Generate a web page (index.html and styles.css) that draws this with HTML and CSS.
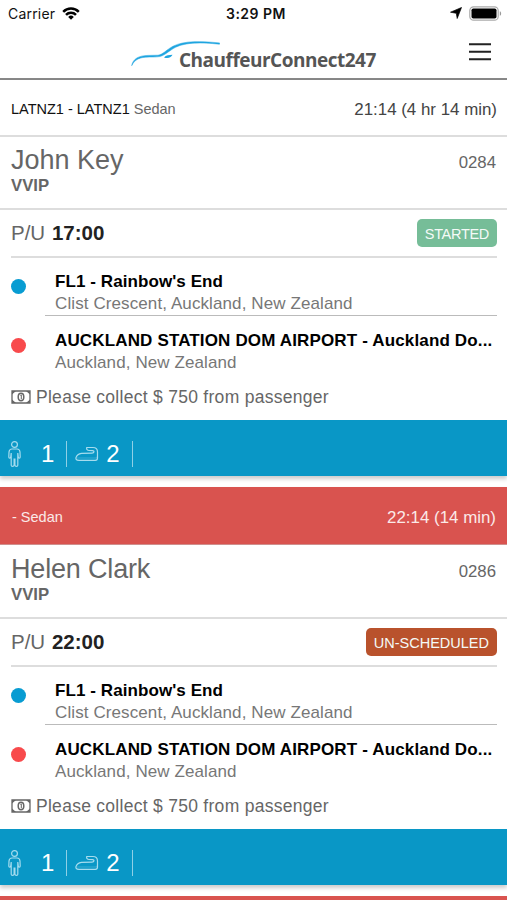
FILE: index.html
```html
<!DOCTYPE html>
<html lang="en">
<head>
<meta charset="utf-8">
<title>ChauffeurConnect247</title>
<link rel="stylesheet" href="styles.css">
</head>
<body>
<svg class="defs" aria-hidden="true">
  <symbol id="person" viewBox="0 0 14 28">
    <circle cx="7.500" cy="4.500" r="2.900"/>
    <path d="M5 9h5c2 0 2.800 1 3 3l.2 5c0 1.500-1.700 1.500-1.900.2L10.800 13v12.200c0 1.500-2.700 1.500-2.900 0V19h-.8v6.200c-.2 1.500-2.900 1.500-2.900 0V13l-.5 4.200c-.2 1.300-1.900 1.300-1.900-.2l.2-5c.2-2 1-3 3-3z"/>
  </symbol>
  <symbol id="bag" viewBox="0 0 24 17">
    <path d="M11.800 1.500H18c3.500 0 4.500 1.500 4.500 4.500V12c0 1.600-.8 2.300-2.200 2.300H4c-3 0-3.500-1.500-2.800-3.300C2 8.500 4 7.800 6.500 7.300l10.500-.2c2.500 0 2.500-2.400.5-2.500L14 4.500c-1.500-.1-2.800-1-2.200-3z"/>
    <path d="M1.500 12h19c1.300 0 1.800-.6 2-1.500" opacity=".3"/>
  </symbol>
  <symbol id="cash" viewBox="0 0 20 14">
    <path d="M1 1h18v12H1z" fill="none" stroke="#666" stroke-width="1.300"/>
    <path d="M1 1h4L1 4.500zM19 1h-4l4 3.500zM1 13h4l-4-3.500zM19 13h-4l4-3.500z" fill="#666"/>
    <ellipse cx="10" cy="7" rx="2.800" ry="3.700" fill="none" stroke="#666" stroke-width="1.500"/>
    <path d="M9.300 5.300l1-.5v4.500" fill="none" stroke="#666"/>
  </symbol>
</svg>

<div class="status">
  <span class="carrier">Carrier</span>
  <svg class="wifi" width="18" height="13" viewBox="0 0 18 13"><g fill="none" stroke="#000" stroke-width="2.500"><path d="M1.200 4.800a11 11 0 0 1 15.600 0"/><path d="M4 7.900a7 7 0 0 1 10 0"/></g><path d="M9 12.700L6.200 9.900a4 4 0 0 1 5.600 0z"/></svg>
  <span class="clock">3:29 PM</span>
  <svg class="arrow" width="12" height="12" viewBox="0 0 12 12"><path d="M11.500.5L7.200 11.500 6.300 6.300.5 5.200z" stroke="#000" stroke-width=".7"/></svg>
  <svg class="battery" width="33" height="15" viewBox="0 0 33 15"><rect x=".8" y=".8" width="28.400" height="13.400" rx="3.800" fill="none" stroke="#aaa" stroke-width="1.200"/><rect x="2.500" y="2.500" width="25" height="10" rx="1.800"/><path d="M30.800 5.200c1.800.6 1.800 4 0 4.600z" fill="#999"/></svg>
</div>

<header class="header">
  <div class="logo">
    <svg width="90" height="26" viewBox="0 0 90 26"><path d="M.7 24.700C2 17.500 8 14.600 17 14.400l10-.2c5-.7 8-5.200 15-9C54-.7 70 .2 88.500 1.900v1.300C70 1.300 55 1.200 44.500 6.300 38 9.700 34 14.500 28.500 15.600c-4 .7-9 .2-14 .6C7.500 16.800 3.500 19 .7 24.700z" fill="#1fa5e0" stroke="#1fa5e0" stroke-width=".5"/><path d="M33 16.500c2-2.300 5-2.500 8.500-2.700-1 2.600-4.500 4.200-8.500 2.700z" fill="#1fa5e0"/></svg>
    <span class="brand">ChauffeurConnect247</span>
  </div>
  <svg class="menu" width="24" height="20" viewBox="0 0 24 20"><path d="M1 2.200h22M1 9.700h22M1 17.200h22" stroke="#222" stroke-width="2"/></svg>
</header>

<main>
  <article class="card">
    <div class="top"><span class="route"><b>LATNZ1 - LATNZ1</b> Sedan</span><span class="eta">21:14 (4 hr 14 min)</span></div>
    <div class="client"><div><div class="name">John Key</div><div class="vip">VVIP</div></div><span class="number">0284</span></div>
    <div class="pickup"><span class="pu">P/U <b>17:00</b></span><span class="tag started">STARTED</span></div>
    <div class="stop first"><i class="dot blue"></i><div class="place"><div class="title t1">FL1 - Rainbow's End</div><div class="address">Clist Crescent, Auckland, New Zealand</div></div></div>
    <div class="stop"><i class="dot red"></i><div class="place"><div class="title">AUCKLAND STATION DOM AIRPORT - Auckland Do...</div><div class="address">Auckland, New Zealand</div></div></div>
    <div class="note"><svg width="20" height="14"><use href="#cash"/></svg><span>Please collect $ 750 from passenger</span></div>
    <div class="counts"><svg class="person" width="14" height="28"><use href="#person"/></svg><span class="one">1</span><i class="bar"></i><svg class="bag" width="24" height="17"><use href="#bag"/></svg><span class="two">2</span><i class="bar"></i></div>
  </article>

  <article class="card late">
    <div class="top"><span class="route">- Sedan</span><span class="eta">22:14 (14 min)</span></div>
    <div class="client"><div><div class="name helen">Helen Clark</div><div class="vip">VVIP</div></div><span class="number">0286</span></div>
    <div class="pickup"><span class="pu">P/U <b>22:00</b></span><span class="tag unscheduled">UN-SCHEDULED</span></div>
    <div class="stop first"><i class="dot blue"></i><div class="place"><div class="title t1">FL1 - Rainbow's End</div><div class="address">Clist Crescent, Auckland, New Zealand</div></div></div>
    <div class="stop"><i class="dot red"></i><div class="place"><div class="title">AUCKLAND STATION DOM AIRPORT - Auckland Do...</div><div class="address">Auckland, New Zealand</div></div></div>
    <div class="note"><svg width="20" height="14"><use href="#cash"/></svg><span>Please collect $ 750 from passenger</span></div>
    <div class="counts"><svg class="person" width="14" height="28"><use href="#person"/></svg><span class="one">1</span><i class="bar"></i><svg class="bag" width="24" height="17"><use href="#bag"/></svg><span class="two">2</span><i class="bar"></i></div>
  </article>

  <div class="next"></div>
</main>
</body>
</html>
```
FILE: styles.css
```css
* { box-sizing: border-box; }
body { margin: 0; background: #fff; font-family: "Liberation Sans", Arial, sans-serif; color: #666; white-space: nowrap; }
svg { display: block; flex: none; }
.defs { display: none; }

.status { height: 28px; display: grid; grid-template-columns: 46px 18px 1fr 12px 33px; align-items: center; padding: 0 5px 0 8px; column-gap: 7px; color: #111; font: 14px/28px Inter, sans-serif; }
.carrier { letter-spacing: .2px; }
.wifi { margin-left: 1px; margin-top: -2px; }
.clock { font-weight: 600; letter-spacing: .5px; padding-left: 140px; }
.arrow, .battery { margin-top: -2px; }

.header { height: 52px; display: flex; justify-content: space-between; padding: 0 15px 0 131px; border-bottom: 2px solid #888; }
.logo { display: flex; padding-top: 13px; }
.brand { margin: 6px 0 0 -42px; font: 700 19px/26px "Open Sans", sans-serif; color: #555; letter-spacing: -.5px; }
.menu { margin-top: 14px; }

.card { height: 396px; margin-bottom: 11px; box-shadow: 0 3px 4px rgba(0, 0, 0, .2); }
.top { height: 57px; display: flex; align-items: center; justify-content: space-between; padding: 4px 10px 0 11px; border-bottom: 2px solid #ddd; }
.route { font-size: 14.500px; margin-top: -1px; }
.route b { font-weight: 400; color: #111; }
.eta { font-size: 16.900px; color: #444; }
.client { height: 73px; display: flex; justify-content: space-between; padding: 7px 11px 0; border-bottom: 2px solid #ddd; }
.name { font-size: 27px; line-height: 32px; }
.helen { letter-spacing: -.17px; }
.vip { font-size: 16.700px; line-height: 20px; font-weight: 700; }
.number { font-size: 16.800px; line-height: 38px; }
.pickup { height: 48px; margin: 0 10px 0 11px; display: flex; align-items: center; justify-content: space-between; border-bottom: 2px solid #ddd; }
.pu { font-size: 20.500px; margin-top: -1px; }
.pu b { color: #222; margin-left: 1px; }
.tag { height: 28px; margin-top: -1px; border-radius: 5px; padding: 0 8px; font-size: 14.500px; line-height: 30px; color: #f4faf7; }
.started { background: #76bd98; letter-spacing: -.3px; }
.unscheduled { background: #b9522c; }
.stop { height: 58px; display: flex; padding: 13px 10px 0 11px; }
.stop.first { padding-top: 12px; }
.dot { width: 15px; height: 15px; border-radius: 50%; margin-top: 9px; flex: none; }
.blue { background: #089cd2; }
.red { background: #f84a4c; }
.place { flex: 1; margin-left: 19px; padding-left: 10px; }
.first .place { border-bottom: 1px solid #bbb; }
.title { font-weight: 700; font-size: 17px; line-height: 23px; letter-spacing: .15px; color: #000; }
.t1 { letter-spacing: .08px; }
.address { font-size: 17px; line-height: 22px; letter-spacing: .1px; color: #777; }
.note { height: 46px; display: flex; align-items: center; gap: 5px; padding: 0 11px; font-size: 17.500px; letter-spacing: .28px; }
.counts { height: 56px; display: flex; align-items: center; padding: 12px 7px 0; background: #0997c6; color: #fff; font-size: 24px; }
.person, .bag { fill: none; stroke: #a5dcee; stroke-width: 1.200; }
.one { margin-left: 20px; }
.bar { width: 1px; height: 26px; background: #8fd0e6; margin-left: 12px; margin-top: -1px; }
.bag { margin-left: 8px; }
.two { margin-left: 7px; }

.late { height: 398px; }
.late .top { height: 58px; background: #d9534f; color: #fbe9e8; border-bottom: 1px solid #cf8f8d; padding: 4px 11px 0 12px; }
.late .eta { color: #fbe9e8; }
.late .client { height: 74px; padding-top: 8px; }
.next { height: 4px; background: #d9534f; }
```
